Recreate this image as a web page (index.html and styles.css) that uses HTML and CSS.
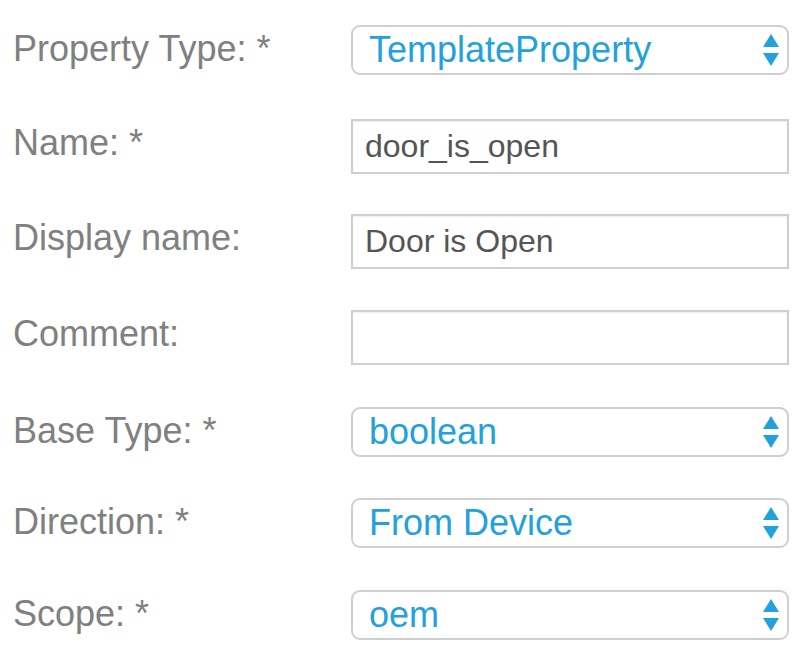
FILE: index.html
```html
<!DOCTYPE html>
<html lang="en">
<head>
<meta charset="utf-8">
<title>Property</title>
<link rel="stylesheet" href="styles.css">
</head>
<body>
<form class="form">
  <div class="row row-m4">
    <label class="label">Property Type: *</label>
    <div class="select"><span class="select-value">TemplateProperty</span><svg class="spinner" viewBox="0 0 16 32" width="16" height="32"><polygon points="8,0 16,13 0,13"/><polygon points="0,19 16,19 8,32"/></svg></div>
  </div>
  <div class="row">
    <label class="label label-input">Name: *</label>
    <div class="input">door_is_open</div>
  </div>
  <div class="row row-m1">
    <label class="label label-input">Display name:</label>
    <div class="input">Door is Open</div>
  </div>
  <div class="row row-m2">
    <label class="label label-input">Comment:</label>
    <div class="input"></div>
  </div>
  <div class="row row-m1">
    <label class="label">Base Type: *</label>
    <div class="select"><span class="select-value">boolean</span><svg class="spinner" viewBox="0 0 16 32" width="16" height="32"><polygon points="8,0 16,13 0,13"/><polygon points="0,19 16,19 8,32"/></svg></div>
  </div>
  <div class="row row-m2">
    <label class="label">Direction: *</label>
    <div class="select"><span class="select-value">From Device</span><svg class="spinner" viewBox="0 0 16 32" width="16" height="32"><polygon points="8,0 16,13 0,13"/><polygon points="0,19 16,19 8,32"/></svg></div>
  </div>
  <div class="row">
    <label class="label">Scope: *</label>
    <div class="select"><span class="select-value">oem</span><svg class="spinner" viewBox="0 0 16 32" width="16" height="32"><polygon points="8,0 16,13 0,13"/><polygon points="0,19 16,19 8,32"/></svg></div>
  </div>
</form>
</body>
</html>
```
FILE: styles.css
```css
html, body {
  margin: 0;
  padding: 0;
  background: #ffffff;
}

body {
  font-family: "Liberation Sans", Arial, Helvetica, sans-serif;
}

.form {
  display: flex;
  flex-direction: column;
  gap: 40px;
  padding: 25px 0 0 13px;
}

.row {
  display: flex;
  align-items: center;
}

.row-m4 {
  margin-bottom: 4px;
}

.row-m2 {
  margin-bottom: 2px;
}

.row-m1 {
  margin-bottom: 1px;
}

.label {
  width: 338px;
  flex: none;
  font-size: 36px;
  color: #808080;
  line-height: 40px;
  padding-bottom: 3px;
}

.label-input {
  padding-bottom: 8px;
}

.select {
  box-sizing: border-box;
  width: 438px;
  height: 50px;
  border: 2px solid #cfcfcf;
  border-radius: 9px;
  display: flex;
  align-items: center;
  justify-content: space-between;
  padding: 0 8px 0 16px;
  background: #fff;
}

.select-value {
  font-size: 36px;
  color: #22a1dc;
  line-height: 40px;
}

.spinner {
  fill: #22a1dc;
  display: block;
}

.input {
  box-sizing: border-box;
  width: 438px;
  height: 55px;
  border: 2px solid #cfcfcf;
  padding: 0 12px;
  font-size: 32px;
  line-height: 51px;
  color: #555555;
  background: #fff;
  box-shadow: inset 0 1px 2px rgba(0, 0, 0, 0.07);
}
```
